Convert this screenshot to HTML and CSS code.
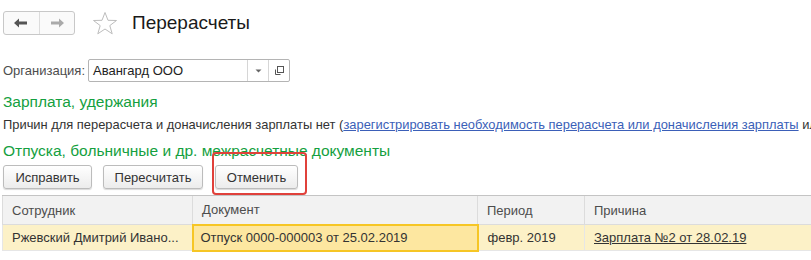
FILE: index.html
```html
<html charset="UTF-8">

<head>
  <meta charset="UTF-8">
  <link rel="stylesheet" href="styles.css">
</head>

<body>
  <div id="page">
    <div id="topbar">
      <div class="nav">
        <span class="nav_btn">
          <svg width="14" height="10" viewBox="0 0 14 10"><polygon points="0,5 5,0.5 5,3.5 13,3.5 13,6.5 5,6.5 5,9.5" fill="#555"/></svg>
        </span>
        <span class="nav_btn">
          <svg width="14" height="10" viewBox="0 0 14 10"><polygon points="14,5 9,0.5 9,3.5 1,3.5 1,6.5 9,6.5 9,9.5" fill="#aaa"/></svg>
        </span>
      </div>
      <svg class="star" width="26" height="24" viewBox="0 0 26 24"><polygon points="13,1.5 16,9.3 24.5,9.5 17.8,14.6 20.2,22.8 13,18 5.8,22.8 8.2,14.6 1.5,9.5 10,9.3" fill="none" stroke="#bdbdbd" stroke-width="1"/></svg>
      <h1 class="title">Перерасчеты</h1>
    </div>

    <div id="org_row">
      <span class="label">Организация:</span>
      <div class="field">
        <span class="field_value">Авангард ООО</span>
        <span class="field_btn">
          <svg width="7" height="4" viewBox="0 0 7 4"><polygon points="0.5,0.5 6.5,0.5 3.5,3.5" fill="#666"/></svg>
        </span>
        <span class="field_btn">
          <svg width="11" height="11" viewBox="0 0 11 11"><rect x="3.5" y="1.5" width="6" height="6" fill="none" stroke="#555"/><path d="M1.5 4.5 V9.5 H6.5" fill="none" stroke="#555"/></svg>
        </span>
      </div>
    </div>

    <div class="group_title">Зарплата, удержания</div>
    <div class="note">Причин для перерасчета и доначисления зарплаты нет (<a href="#">зарегистрировать необходимость перерасчета или доначисления зарплаты</a> ил</div>

    <div class="group_title second">Отпуска, больничные и др. межрасчетные документы</div>
    <div id="buttons">
      <button class="btn b1">Исправить</button>
      <button class="btn b2">Пересчитать</button>
      <button class="btn b3">Отменить</button>
      <div class="mark"></div>
    </div>

    <div id="grid">
      <table>
        <colgroup>
          <col class="c1">
          <col class="c2">
          <col class="c3">
          <col class="c4">
        </colgroup>
        <tr class="head">
          <th>Сотрудник</th>
          <th>Документ</th>
          <th>Период</th>
          <th>Причина</th>
        </tr>
        <tr class="row">
          <td>Ржевский Дмитрий Ивано...</td>
          <td class="current">Отпуск 0000-000003 от 25.02.2019</td>
          <td>февр. 2019</td>
          <td><a href="#">Зарплата №2 от 28.02.19</a></td>
        </tr>
      </table>
    </div>
  </div>
</body>

</html>
```

FILE: styles.css
```css
body {
  margin: 0;
  background-color: white;
  font-family: "Liberation Sans", Arial, sans-serif;
  color: #4d4d4d;
}

#page {
  width: 811px;
  height: 260px;
  overflow: hidden;
}

#topbar {
  display: flex;
  align-items: center;
  padding: 11px 0 0 3px;
  height: 24px;
}

.nav {
  display: flex;
  width: 70px;
  height: 22px;
  border: 1px solid #c8c8c8;
  border-radius: 3px;
  background-color: #fafafa;
}

.nav_btn {
  flex: 1;
  display: flex;
  align-items: center;
  justify-content: center;
}

.nav_btn + .nav_btn {
  border-left: 1px solid #dcdcdc;
}

.star {
  margin-left: 17px;
}

.title {
  margin: 0 0 0 14px;
  font-size: 19px;
  font-weight: normal;
  color: #1a1a1a;
}

#org_row {
  display: flex;
  align-items: center;
  margin-top: 24px;
  padding-left: 3px;
  height: 23px;
}

.label {
  font-size: 13px;
  width: 85px;
}

.field {
  display: flex;
  width: 200px;
  height: 21px;
  border: 1px solid #b4b4b4;
  border-radius: 2px;
}

.field_value {
  flex: 1;
  padding-left: 4px;
  font-size: 13px;
  line-height: 21px;
  color: #222;
}

.field_btn {
  width: 20px;
  display: flex;
  align-items: center;
  justify-content: center;
  border-left: 1px solid #d6d6d6;
}

.group_title {
  margin-top: 11px;
  padding-left: 3px;
  font-size: 15.5px;
  line-height: 18px;
  color: #14a040;
  white-space: nowrap;
}

.group_title.second {
  margin-top: 9px;
}

.note {
  margin-top: 6px;
  padding-left: 3px;
  font-size: 12.9px;
  line-height: 16px;
  color: #333;
  white-space: nowrap;
  overflow: hidden;
}

.note a {
  color: #3b5fb8;
}

#buttons {
  position: relative;
  display: flex;
  margin-top: 5px;
  padding-left: 3px;
  height: 24px;
}

.btn {
  height: 24px;
  padding: 0;
  font-family: "Liberation Sans", Arial, sans-serif;
  font-size: 13px;
  color: #333;
  background: linear-gradient(#ffffff, #ececec);
  border: 1px solid #bcbcbc;
  border-radius: 3px;
  box-shadow: 0 1px 1px rgba(0, 0, 0, 0.15);
}

.b1 { width: 89px; }
.b2 { width: 100px; margin-left: 11px; }
.b3 { width: 83px; margin-left: 12px; }

.mark {
  position: absolute;
  left: 212px;
  top: -13px;
  width: 91px;
  height: 39px;
  border: 2px solid #e0413b;
  border-radius: 4px;
}

#grid {
  margin-top: 6px;
  margin-left: 2px;
}

table {
  border-collapse: collapse;
  table-layout: fixed;
  width: 830px;
  font-size: 13px;
}

.c1 { width: 190px; }
.c2 { width: 285px; }
.c3 { width: 107px; }
.c4 { width: 248px; }

th, td {
  text-align: left;
  font-weight: normal;
  padding: 0 0 0 9px;
  white-space: nowrap;
  overflow: hidden;
}

.head th {
  height: 29px;
  background-color: #f2f2f2;
  border-top: 1px solid #c4c4c4;
  border-left: 1px solid #dcdcdc;
  border-bottom: 1px solid #dcdcdc;
  color: #4d4d4d;
}

.row td {
  height: 26px;
  background-color: #fcf1c7;
  border-left: 1px solid #e6e6e6;
  border-bottom: 1px solid #e6e6e6;
  color: #333;
}

.row td.current {
  background-color: #fde7a0;
  border: 2px solid #f6c625;
  padding-left: 7px;
}

.row a {
  color: #333;
}
```
